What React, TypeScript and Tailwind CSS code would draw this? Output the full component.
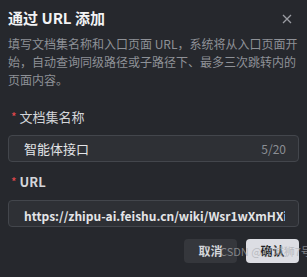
import React from "react";

export default function App() {
  const font = { fontFamily: '"Noto Sans CJK SC", "Noto Sans", sans-serif' };
  return (
    <div className="relative w-[307px] h-[277px] overflow-hidden bg-[#26282d]" style={font}>
      <div className="flex flex-col px-2 pt-[8px]">
        <div className="flex items-center justify-between h-[20px]">
          <span className="text-[15px] font-bold text-[#f2f3f5] leading-[20px]">通过 URL 添加</span>
          <svg width="10" height="10" viewBox="0 0 10 10" className="mr-[7px] mt-[1px]">
            <path d="M1 1L9 9M9 1L1 9" stroke="#9a9ca2" strokeWidth="1.3" />
          </svg>
        </div>
        <p className="mt-[7px] text-[12px] leading-[18px] text-[#8e9197]">
          填写文档集名称和入口页面 URL，系统将从入口页面开始，自动查询同级路径或子路径下、最多三次跳转内的页面内容。
        </p>
        <div className="mt-[18px] flex items-center h-[20px] pl-[3px]">
          <span className="text-[#e5484d] text-[12px] mr-[3px] leading-none">*</span>
          <span className="text-[13px] text-[#d4d6da]">文档集名称</span>
        </div>
        <div className="mt-[8px] h-[27px] rounded-[4px] border border-[#43464c] bg-[#2e3035] flex items-center justify-between pl-[15px] pr-[12px]">
          <span className="text-[13px] text-[#e4e5e8]">智能体接口</span>
          <span className="text-[12px] text-[#8b8e94]">5/20</span>
        </div>
        <div className="mt-[10px] flex items-center h-[20px] pl-[3px]">
          <span className="text-[#e5484d] text-[12px] mr-[3px] leading-none">*</span>
          <span className="text-[13px] font-semibold text-[#d4d6da]">URL</span>
        </div>
        <div className="mt-[8px] h-[27px] rounded-[4px] border border-[#43464c] bg-[#2e3035] flex items-center pl-[15px] pr-[13px]">
          <div className="flex-1 overflow-hidden">
            <span className="text-[12px] font-semibold text-[#e4e5e8] whitespace-nowrap">https://zhipu-ai.feishu.cn/wiki/Wsr1wXmHXiQ</span>
          </div>
        </div>
        <div className="mt-[12px] flex justify-end gap-[9px]">
          <button className="w-[53px] h-[24px] rounded-[4px] bg-[#35373c] text-[12px] font-semibold text-[#d4d6da]">取消</button>
          <button className="w-[53px] h-[24px] rounded-[4px] bg-[#dcdde3] text-[12px] font-bold text-[#1d1f23]">确认</button>
        </div>
      </div>
      <div className="absolute left-[220px] top-[244px] text-[11px] leading-[14px] text-[#a9abb0]/70 whitespace-nowrap">CSDN @攻城狮7号</div>
    </div>
  );
}
